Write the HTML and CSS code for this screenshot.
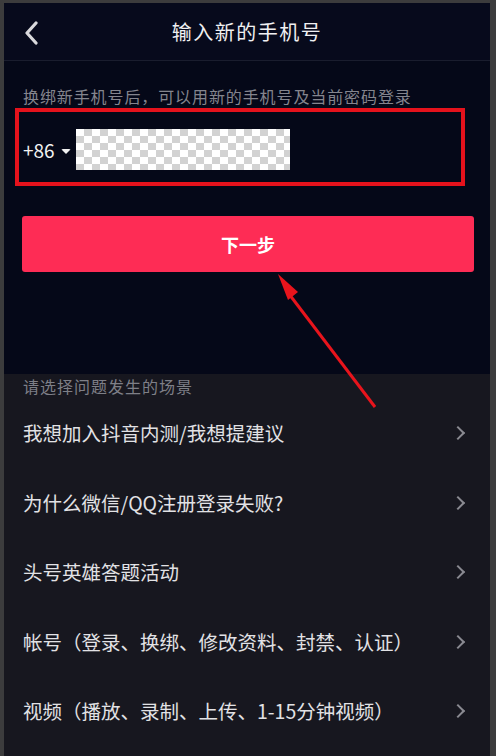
FILE: index.html
```html
<!DOCTYPE html>
<html>
  <head>
    <meta charset="utf-8">
    <title>输入新的手机号</title>
    <link rel="stylesheet" href="styles.css">
  </head>
  <body>
    <div class="phone">
      <header class="topbar">
        <svg class="back" width="16" height="24" viewBox="0 0 16 24">
          <polyline points="12,2 3,12 12,22" fill="none" stroke="#d9d9dc" stroke-width="3.2" stroke-linecap="round" stroke-linejoin="round"/>
        </svg>
        <h1 class="title">输入新的手机号</h1>
      </header>

      <section class="bind">
        <p class="hint">换绑新手机号后，可以用新的手机号及当前密码登录</p>
        <div class="field">
          <span class="code">+86</span>
          <span class="caret"></span>
          <span class="masked"></span>
        </div>
        <button class="next">下一步</button>
      </section>

      <section class="help">
        <p class="help-title">请选择问题发生的场景</p>
        <ul class="topics">
          <li>我想加入抖音内测/我想提建议</li>
          <li>为什么微信/QQ注册登录失败?</li>
          <li>头号英雄答题活动</li>
          <li>帐号（登录、换绑、修改资料、封禁、认证）</li>
          <li>视频（播放、录制、上传、1-15分钟视频）</li>
        </ul>
      </section>

      <!-- pointer to the button -->
      <svg class="arrow" width="486" height="756" viewBox="0 0 486 756">
        <line x1="371" y1="407" x2="282" y2="290" stroke="#e8141c" stroke-width="3"/>
        <polygon points="274,274 284,300 294,292" fill="#e8141c"/>
      </svg>
    </div>
  </body>
</html>
```

FILE: styles.css
```css
body {
  margin: 0;
  background-color: #3c3c3d;
  font-family: "Noto Sans CJK SC", "Noto Sans", sans-serif;
  overflow: hidden;
}
.phone {
  position: relative;
  margin: 3px 0 0 4px;
  width: 486px;
  height: 753px;
  background-color: #17171f;
}
.topbar {
  height: 57px;
  display: flex;
  align-items: center;
  justify-content: center;
  position: relative;
  background-color: #070a1c;
  border-bottom: 1px solid #1a1d2e;
}
.back {
  position: absolute;
  left: 20px;
  top: 18px;
}
.title {
  margin: 0;
  font-size: 20px;
  font-weight: normal;
  letter-spacing: 1.5px;
  color: #f0f0f2;
}
.bind {
  background-color: #050818;
  height: 313px;
  padding-top: 24px;
  box-sizing: border-box;
}
.hint {
  margin: 0 0 0 19px;
  font-size: 16px;
  line-height: 22px;
  letter-spacing: 0.9px;
  color: #84858e;
}
.field {
  margin: 1px 0 0 11px;
  width: 450px;
  height: 78px;
  box-sizing: border-box;
  border: 4px solid #e5121c;
  display: flex;
  align-items: center;
  padding: 4px 0 0 4px;
}
.code {
  font-size: 19px;
  color: #f2f2f2;
}
.caret {
  margin: 4px 5px 0 6px;
  border-left: 5px solid transparent;
  border-right: 5px solid transparent;
  border-top: 5px solid #f2f2f2;
  border-radius: 2px;
}
.masked {
  width: 214px;
  height: 41px;
  background-color: #ffffff;
  background-image: repeating-conic-gradient(#d2d2d2 0 25%, #ffffff 0 50%);
  background-size: 16px 14px;
}
.next {
  display: block;
  margin: 30px 0 0 18px;
  width: 452px;
  height: 56px;
  border: none;
  border-radius: 3px;
  background-color: #fe2c55;
  color: #ffffff;
  font-family: inherit;
  font-size: 18px;
  font-weight: bold;
}
.help {
  background-color: #17171f;
}
.help-title {
  margin: 0 0 0 19px;
  padding-top: 1px;
  font-size: 16px;
  line-height: 22px;
  letter-spacing: 1px;
  color: #7e7f87;
}
.topics {
  list-style: none;
  margin: 0;
  padding: 1px 0 0 0;
}
.topics li {
  height: 69.5px;
  display: flex;
  align-items: center;
  padding-left: 19px;
  padding-right: 28px;
  font-size: 19.5px;
  color: #e2e2e5;
  position: relative;
}
.topics li::after {
  content: "";
  position: absolute;
  right: 27px;
  top: 30px;
  width: 8px;
  height: 8px;
  border-top: 2px solid #8a8a91;
  border-right: 2px solid #8a8a91;
  transform: rotate(45deg);
}
.arrow {
  position: absolute;
  left: 0;
  top: -3px;
  pointer-events: none;
}
```
